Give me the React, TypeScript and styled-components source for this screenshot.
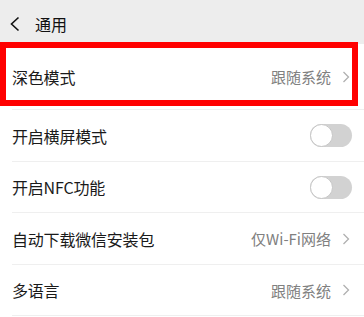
import React from "react";
import styled, { createGlobalStyle } from "styled-components";

const Global = createGlobalStyle`
  html, body { margin: 0; padding: 0; background: #ffffff; }
  body { font-family: "Noto Sans CJK SC", "Noto Sans", sans-serif; -webkit-font-smoothing: antialiased; }
  * { box-sizing: border-box; }
`;

const Page = styled.div`
  width: 364px;
  height: 317px;
  overflow: hidden;
  background: #ffffff;
  display: flex;
  flex-direction: column;
`;

const Header = styled.div`
  height: 44px;
  flex: none;
  background: #ededed;
  display: flex;
  align-items: center;
  padding: 4px 0 0 9px;
  gap: 14px;
`;

const Title = styled.div`
  font-size: 16px;
  color: #111111;
  line-height: 1;
`;

const Row = styled.div<{ $h: number }>`
  position: relative;
  height: ${(p) => p.$h}px;
  flex: none;
  padding-left: 12px;
  background: #ffffff;
`;

const Inner = styled.div`
  height: 100%;
  display: flex;
  align-items: center;
  justify-content: space-between;
  padding-right: 14px;
  border-bottom: 1px solid #efefef;
`;

const Label = styled.div`
  font-size: 16px;
  color: #1a1a1a;
  letter-spacing: -0.2px;
`;

const Right = styled.div`
  display: flex;
  align-items: center;
  gap: 11px;
`;

const Value = styled.div`
  font-size: 15px;
  color: #808080;
`;

const Highlight = styled.div`
  position: absolute;
  left: 0;
  top: -2px;
  width: 358px;
  height: 64px;
  border: 6px solid #ff0000;
  pointer-events: none;
`;

const Track = styled.div`
  width: 42px;
  height: 23px;
  border-radius: 12px;
  background: #d2d2d2;
  position: relative;
  margin-right: -2px;
`;

const Knob = styled.div`
  position: absolute;
  left: 0;
  top: 0;
  width: 23px;
  height: 23px;
  border-radius: 50%;
  background: #ffffff;
  border: 1.5px solid #c6c6c6;
`;

const Chevron = () => (
  <svg width="8" height="12" viewBox="0 0 8 12">
    <path d="M1.5 1 L6.5 6 L1.5 11" fill="none" stroke="#b0b0b0" strokeWidth="1.3" />
  </svg>
);

const Back = () => (
  <svg width="12" height="16" viewBox="0 0 12 16">
    <path d="M9.5 1.5 L2.5 8 L9.5 14.5" fill="none" stroke="#111" strokeWidth="1.6" />
  </svg>
);

const Toggle = () => (
  <Track>
    <Knob />
  </Track>
);

export default function App() {
  return (
    <>
      <Global />
      <Page>
        <Header>
          <Back />
          <Title>通用</Title>
        </Header>
        <Row $h={66}>
          <Inner>
            <Label>深色模式</Label>
            <Right>
              <Value>跟随系统</Value>
              <Chevron />
            </Right>
          </Inner>
          <Highlight />
        </Row>
        <Row $h={52}>
          <Inner>
            <Label>开启横屏模式</Label>
            <Toggle />
          </Inner>
        </Row>
        <Row $h={51}>
          <Inner>
            <Label>开启NFC功能</Label>
            <Toggle />
          </Inner>
        </Row>
        <Row $h={52}>
          <Inner>
            <Label>自动下载微信安装包</Label>
            <Right>
              <Value>仅Wi-Fi网络</Value>
              <Chevron />
            </Right>
          </Inner>
        </Row>
        <Row $h={51}>
          <Inner>
            <Label>多语言</Label>
            <Right>
              <Value>跟随系统</Value>
              <Chevron />
            </Right>
          </Inner>
        </Row>
      </Page>
    </>
  );
}
